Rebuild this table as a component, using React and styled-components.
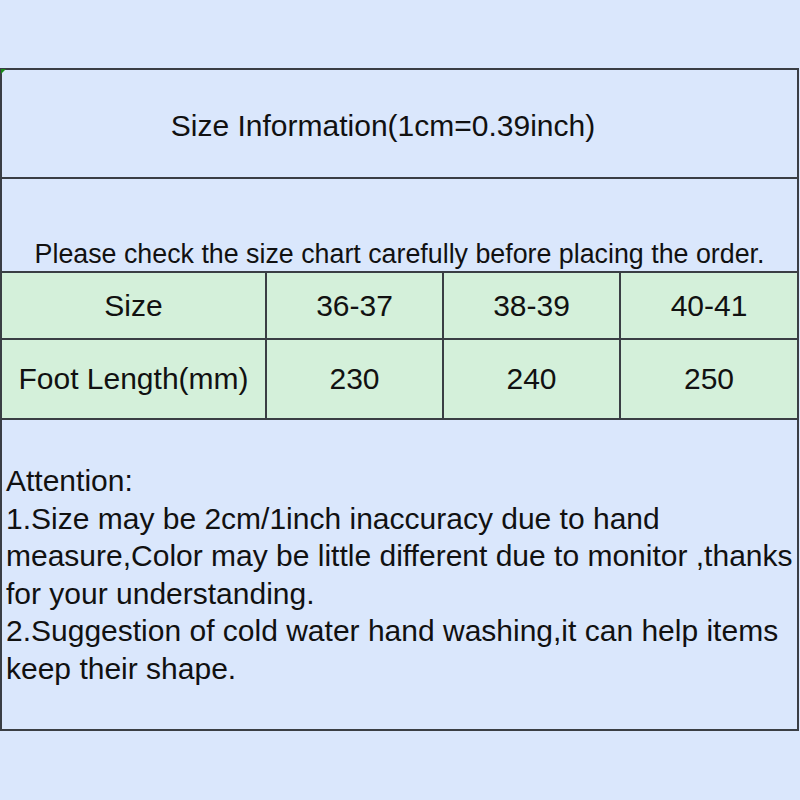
import styled, { createGlobalStyle } from 'styled-components';

const GlobalStyle = createGlobalStyle`
  html, body {
    margin: 0;
    padding: 0;
    background: #dae7fc;
  }
  body {
    width: 800px;
    height: 800px;
    font-family: "Liberation Sans", Arial, sans-serif;
    color: #111;
  }
`;

const sizes = ['36-37', '38-39', '40-41'];
const lengths = ['230', '240', '250'];

export default function App() {
  return (
    <>
      <GlobalStyle />
      <Page>
        <Sheet>
          <Corner />
          <Header>Size Information(1cm=0.39inch)</Header>
          <Intro>Please check the size chart carefully before placing the order.</Intro>
          <Table>
            <Cell $h={67}>Size</Cell>
            {sizes.map((s) => (
              <Cell key={s} $h={67}>{s}</Cell>
            ))}
            <Cell $h={78} $last>Foot Length(mm)</Cell>
            {lengths.map((l) => (
              <Cell key={l} $h={78} $last>{l}</Cell>
            ))}
          </Table>
          <Notes>
            <p>Attention:</p>
            <p>1.Size may be 2cm/1inch inaccuracy due to hand measure,Color may be little different due to monitor ,thanks for your understanding.</p>
            <p>2.Suggestion of cold water hand washing,it can help items keep their shape.</p>
          </Notes>
        </Sheet>
      </Page>
    </>
  );
}

const Page = styled.div`
  padding-top: 68px;
`;

const Sheet = styled.div`
  position: relative;
  width: 799px;
  box-sizing: border-box;
  border: 2px solid #3a3e44;
  display: flex;
  flex-direction: column;
`;

const Corner = styled.div`
  position: absolute;
  top: -1px;
  left: -1px;
  width: 0;
  height: 0;
  border-top: 5px solid #1a8a1a;
  border-right: 5px solid transparent;
`;

const Header = styled.div`
  height: 109px;
  box-sizing: border-box;
  border-bottom: 2px solid #3a3e44;
  display: flex;
  align-items: center;
  justify-content: center;
  font-size: 30px;
  padding: 4px 33px 0 0;
`;

const Intro = styled.div`
  height: 92px;
  box-sizing: border-box;
  display: flex;
  align-items: flex-end;
  justify-content: center;
  font-size: 26.8px;
  padding-bottom: 1px;
`;

const Table = styled.div`
  display: grid;
  grid-template-columns: 265px 177px 177px 1fr;
  background: #d4f0da;
  border-top: 2px solid #3a3e44;
  border-bottom: 2px solid #3a3e44;
`;

const Cell = styled.div`
  height: ${(p) => p.$h}px;
  box-sizing: border-box;
  display: flex;
  align-items: center;
  justify-content: center;
  font-size: 30px;
  border-right: 2px solid #3a3e44;
  border-bottom: ${(p) => (p.$last ? 'none' : '2px solid #3a3e44')};
  &:nth-child(4n) {
    border-right: none;
  }
`;

const Notes = styled.div`
  height: 309px;
  box-sizing: border-box;
  padding: 42px 0 0 4px;
  font-size: 30px;
  line-height: 37.6px;
  p {
    margin: 0;
  }
`;
